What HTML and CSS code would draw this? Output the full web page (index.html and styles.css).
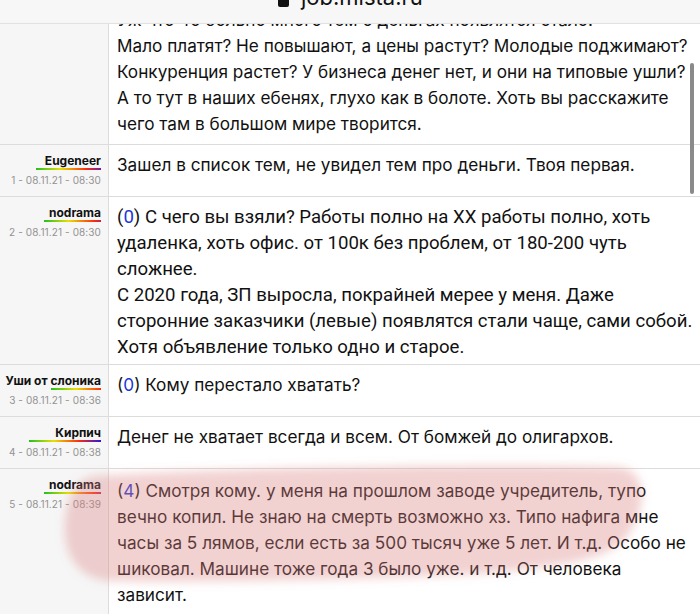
FILE: index.html
```html
<!DOCTYPE html>
<html lang="ru">
<head>
<meta charset="utf-8">
<title>job.mista.ru</title>
<link rel="stylesheet" href="styles.css">
</head>
<body>
<div class="thread">
  <div class="post post-first">
    <div class="meta"></div>
    <div class="msg">Уж что-то больно много тем о деньгах появлятся стало.<br>Мало платят? Не повышают, а цены растут? Молодые поджимают?<br>Конкуренция растет? У бизнеса денег нет, и они на типовые ушли?<br>А то тут в наших ебенях, глухо как в болоте. Хоть вы расскажите<br>чего там в большом мире творится.</div>
  </div>
  <div class="post">
    <div class="meta">
      <span class="name"><span class="karma k65"></span>Eugeneer</span>
      <span class="date">1 - 08.11.21 - 08:30</span>
    </div>
    <div class="msg">Зашел в список тем, не увидел тем про деньги. Твоя первая.</div>
  </div>
  <div class="post">
    <div class="meta">
      <span class="name"><span class="karma k57"></span>nodrama</span>
      <span class="date">2 - 08.11.21 - 08:30</span>
    </div>
    <div class="msg msg-alt">(<span class="ref">0</span>) С чего вы взяли? Работы полно на XX работы полно, хоть<br>удаленка, хоть офис. от 100к без проблем, от 180-200 чуть<br>сложнее.<br>С 2020 года, ЗП выросла, покрайней мерее у меня. Даже<br>сторонние заказчики (левые) появлятся стали чаще, сами собой.<br>Хотя объявление только одно и старое.</div>
  </div>
  <div class="post">
    <div class="meta">
      <span class="name"><span class="karma k50"></span>Уши от слоника</span>
      <span class="date">3 - 08.11.21 - 08:36</span>
    </div>
    <div class="msg">(<span class="ref">0</span>) Кому перестало хватать?</div>
  </div>
  <div class="post">
    <div class="meta">
      <span class="name"><span class="karma k72"></span>Кирпич</span>
      <span class="date">4 - 08.11.21 - 08:38</span>
    </div>
    <div class="msg">Денег не хватает всегда и всем. От бомжей до олигархов.</div>
  </div>
  <div class="post post-last">
    <div class="meta">
      <span class="name"><span class="karma k57"></span>nodrama</span>
      <span class="date">5 - 08.11.21 - 08:39</span>
    </div>
    <div class="msg">(<span class="ref">4</span>) Смотря кому. у меня на прошлом заводе учредитель, тупо<br>вечно копил. Не знаю на смерть возможно хз. Типо нафига мне<br>часы за 5 лямов, если есть за 500 тысяч уже 5 лет. И т.д. Особо не<br>шиковал. Машине тоже года 3 было уже. и т.д. От человека<br>зависит.</div>
  </div>
</div>

<div class="urlbar">
  <span class="lock"></span>
  <span class="host">job.mista.ru</span>
</div>

<div class="scrollbar"></div>

<svg class="marker" width="700" height="614" viewBox="0 0 700 614" aria-hidden="true">
  <defs>
    <filter id="soft" x="-20%" y="-50%" width="140%" height="200%">
      <feGaussianBlur stdDeviation="5"/>
    </filter>
  </defs>
  <path filter="url(#soft)" fill="rgba(219,127,127,0.36)" d="M 95 476 C 250 466, 520 464, 618 467 C 648 470, 648 505, 628 535 C 612 560, 560 566, 490 573 C 400 579, 200 583, 110 581 C 70 579, 58 540, 68 505 C 72 488, 80 478, 95 476 Z"/>
</svg>
</body>
</html>
```

FILE: styles.css
```css
html, body {
  margin: 0;
  padding: 0;
  background: #ffffff;
}

body {
  width: 700px;
  height: 614px;
  overflow: hidden;
  position: relative;
  font-family: Inter, "Noto Sans", "Liberation Sans", sans-serif;
  color: #111111;
}

.thread {
  display: flex;
  flex-direction: column;
}

.post {
  display: grid;
  grid-template-columns: 109px 1fr;
  border-bottom: 1px solid #dcdcdc;
}

.meta {
  background: #f6f6f6;
  border-right: 1px solid #dcdcdc;
  padding: 9px 7px 9px 0;
  display: flex;
  flex-direction: column;
  align-items: flex-end;
}

.name {
  position: relative;
  font-size: 12px;
  font-weight: 700;
  line-height: 14px;
  height: 14px;
  white-space: nowrap;
  color: #111;
}

.karma {
  position: absolute;
  right: 0;
  bottom: -2px;
  height: 2px;
  background: linear-gradient(90deg, #22c020 0%, #e8e000 33%, #ff2a10 67%, #1010ff 100%);
  background-size: 75px 100%;
  background-repeat: no-repeat;
}

.k50 { width: 50px; }
.k57 { width: 57px; }
.k65 { width: 65px; }
.k72 { width: 72px; }

.date {
  margin-top: 5px;
  font-size: 10px;
  line-height: 14px;
  letter-spacing: 0.1px;
  color: #929292;
  white-space: nowrap;
}

.msg {
  padding: 7px 0 4px 8px;
  font-size: 17.2px;
  line-height: 26px;
  white-space: nowrap;
}

.msg-alt {
  font-family: Roboto, Inter, sans-serif;
  font-size: 18.6px;
}

.post-first .msg {
  padding-top: 7px;
  padding-bottom: 7px;
}

.post-last .msg {
  padding-top: 9px;
  padding-bottom: 6px;
}

.ref {
  color: #1a36d8;
}

.urlbar {
  position: absolute;
  top: 0;
  left: 0;
  width: 700px;
  height: 23px;
  background: #f7f7f7;
  border-bottom: 1px solid #e2e2e2;
  overflow: hidden;
}

.lock {
  position: absolute;
  left: 278px;
  top: -4px;
  width: 11px;
  height: 11px;
  border-radius: 2px;
  background: #111;
}

.host {
  position: absolute;
  left: 301px;
  top: -19px;
  font-size: 22px;
  line-height: 32px;
  color: #111;
  white-space: nowrap;
}

.scrollbar {
  position: absolute;
  left: 690px;
  top: 63px;
  width: 4px;
  height: 131px;
  border-radius: 2px;
  background: #8a8a8a;
}

.marker {
  position: absolute;
  top: 0;
  left: 0;
  pointer-events: none;
}
```
